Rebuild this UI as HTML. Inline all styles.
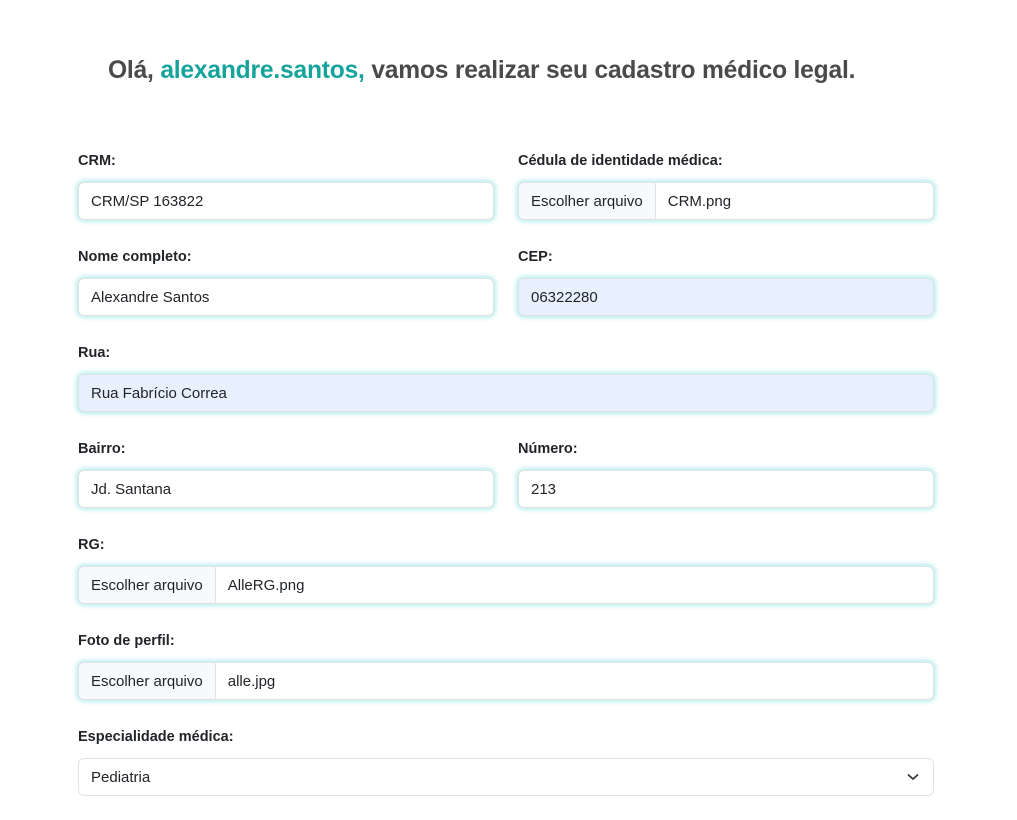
<!DOCTYPE html>
<html><head><meta charset="utf-8"><style>
*{box-sizing:border-box;margin:0;padding:0}
body{width:1017px;height:820px;background:#fff;font-family:"Liberation Sans",sans-serif;color:#212529;position:relative;overflow:hidden}
h1{position:absolute;left:108px;top:57px;font-size:24.6px;font-weight:bold;color:#4a4a4a;white-space:nowrap;letter-spacing:-0.2px}
h1 span{color:#16a39b}
.l{position:absolute;font-size:14.5px;font-weight:bold;color:#212529}
.i{position:absolute;height:38px;border:1px solid #dee2e6;border-radius:6px;background:#fff;box-shadow:0 0 4px 2px rgba(100,220,215,.45);font-size:15px;padding-left:12px;line-height:38px;overflow:hidden;white-space:nowrap}
.i.b{background:#e8f0fe}
.i .btn{display:inline-block;height:36px;margin-left:-12px;padding:0 12px;background:#f8f9fa;border-right:1px solid #dee2e6;margin-right:12px}
.s{position:absolute;left:78px;top:758px;width:856px;height:38px;border:1px solid #dee2e6;border-radius:6px;font-size:15px;padding-left:12px;line-height:38px}
</style></head><body>
<h1>Olá, <span>alexandre.santos,</span> vamos realizar seu cadastro médico legal.</h1>

<div class="l" style="left:78px;top:153px">CRM:</div>
<div class="i" style="left:78px;top:182px;width:416px">CRM/SP 163822</div>
<div class="l" style="left:518px;top:153px">Cédula de identidade médica:</div>
<div class="i" style="left:518px;top:182px;width:416px"><span class="btn">Escolher arquivo</span>CRM.png</div>

<div class="l" style="left:78px;top:249px">Nome completo:</div>
<div class="i" style="left:78px;top:278px;width:416px">Alexandre Santos</div>
<div class="l" style="left:518px;top:249px">CEP:</div>
<div class="i b" style="left:518px;top:278px;width:416px">06322280</div>

<div class="l" style="left:78px;top:345px">Rua:</div>
<div class="i b" style="left:78px;top:374px;width:856px">Rua Fabrício Correa</div>

<div class="l" style="left:78px;top:441px">Bairro:</div>
<div class="i" style="left:78px;top:470px;width:416px">Jd. Santana</div>
<div class="l" style="left:518px;top:441px">Número:</div>
<div class="i" style="left:518px;top:470px;width:416px">213</div>

<div class="l" style="left:78px;top:537px">RG:</div>
<div class="i" style="left:78px;top:566px;width:856px"><span class="btn">Escolher arquivo</span>AlleRG.png</div>

<div class="l" style="left:78px;top:633px">Foto de perfil:</div>
<div class="i" style="left:78px;top:662px;width:856px"><span class="btn">Escolher arquivo</span>alle.jpg</div>

<div class="l" style="left:78px;top:729px">Especialidade médica:</div>
<div class="s">Pediatria
<svg style="position:absolute;right:14px;top:13px" width="12" height="10" viewBox="0 0 12 10"><path d="M1.5 3 L6 7 L10.5 3" fill="none" stroke="#343a40" stroke-width="1.8" stroke-linecap="round" stroke-linejoin="round"/></svg></div>
</body></html>
